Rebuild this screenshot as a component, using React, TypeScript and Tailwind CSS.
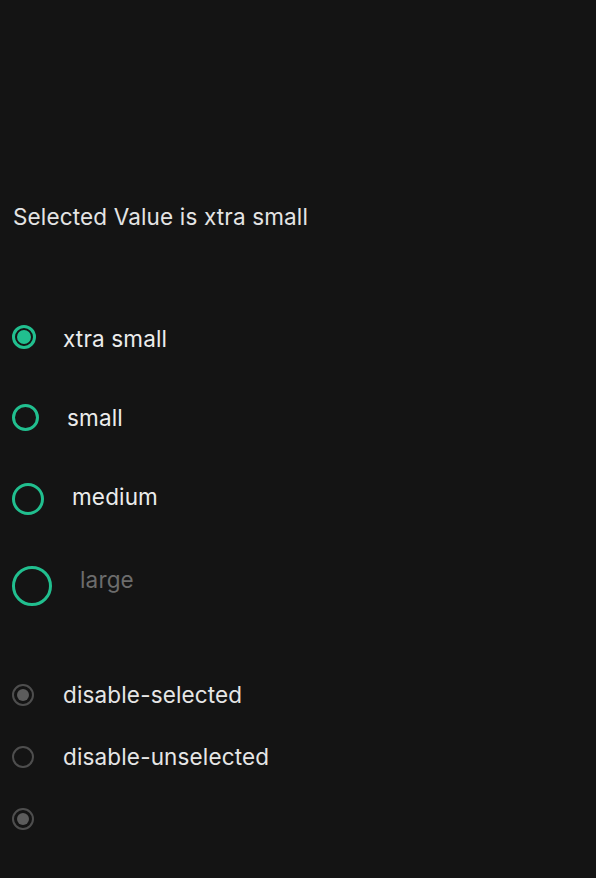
import React from "react";

function Ring({ size, selected, disabled }: { size: number; selected?: boolean; disabled?: boolean }) {
  const border = disabled ? "border-[2.5px] border-[#4e4e4e]" : "border-[3px] border-[#21bf8f]";
  return (
    <div
      className={`shrink-0 rounded-full ${border} flex items-center justify-center`}
      style={{ width: size, height: size }}
    >
      {selected && (
        <div
          className={`rounded-full ${disabled ? "bg-[#5c5c5c]" : "bg-[#21bf8f]"}`}
          style={{ width: size - 10, height: size - 10 }}
        />
      )}
    </div>
  );
}

export default function App() {
  return (
    <div className="min-h-[878px] w-full bg-[#141414] pl-3 font-['Inter',sans-serif] tracking-[0.15px] flex flex-col">
      <div className="mt-[203px] ml-px h-[28px] text-[22.5px] leading-[28px] text-[#e4e4e4]">Selected Value is xtra small</div>

      <div className="mt-[94px] h-[24px] flex items-center">
        <Ring size={24} selected />
        <span className="ml-[27px] text-[22.5px] leading-[28px] text-[#ececec] mt-[4px]">xtra small</span>
      </div>

      <div className="mt-[55px] h-[27px] flex items-center">
        <Ring size={27} />
        <span className="ml-[28px] text-[22.5px] leading-[28px] text-[#ececec]">small</span>
      </div>

      <div className="mt-[52px] h-[32px] flex items-center">
        <Ring size={32} />
        <span className="ml-[28px] text-[22.5px] leading-[28px] text-[#ececec] mb-[4px]">medium</span>
      </div>

      <div className="mt-[51px] h-[40px] flex items-center">
        <Ring size={40} />
        <span className="ml-[28px] text-[22.5px] leading-[28px] text-[#6c6c6c] mb-[12px]">large</span>
      </div>

      <div className="mt-[78px] h-[22px] flex items-center">
        <Ring size={22} selected disabled />
        <span className="ml-[29px] text-[22.5px] leading-[28px] text-[#e6e6e6]">disable-selected</span>
      </div>

      <div className="mt-[40px] h-[22px] flex items-center">
        <Ring size={22} disabled />
        <span className="ml-[29px] text-[22.5px] leading-[28px] text-[#e6e6e6]">disable-unselected</span>
      </div>

      <div className="mt-[40px] h-[22px] flex items-center">
        <Ring size={22} selected disabled />
      </div>
    </div>
  );
}
